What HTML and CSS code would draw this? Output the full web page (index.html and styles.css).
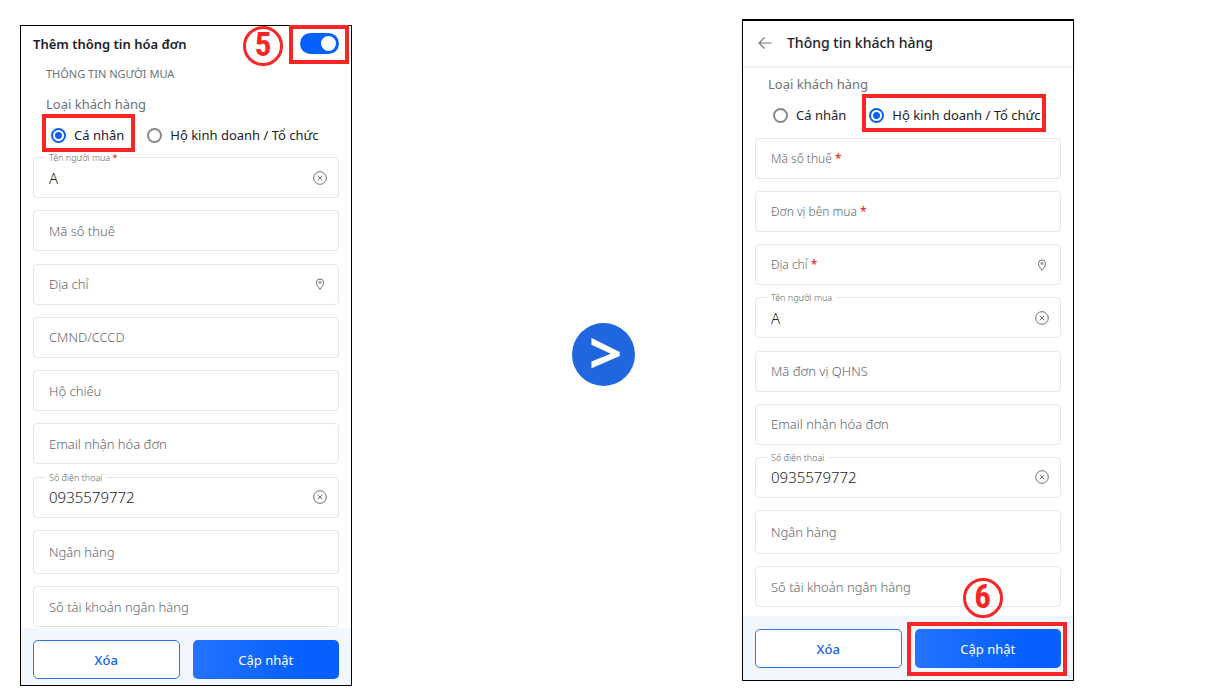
FILE: index.html
```
<!DOCTYPE html>
<html lang="vi">
<head>
<meta charset="utf-8">
<meta name="viewport" content="width=device-width, initial-scale=1">
<title>Thông tin hóa đơn</title>
<link rel="stylesheet" href="styles.css">
</head>
<body>
<svg class="sprite" aria-hidden="true">
  <symbol id="clear" viewBox="0 0 14 14"><circle cx="7" cy="7" r="6.3"/><path d="M4.8 4.8l4.4 4.4M9.2 4.8L4.8 9.2"/></symbol>
  <symbol id="pin" viewBox="0 0 14 14"><path d="M7 12.3C5 9.7 3.5 7.8 3.5 5.6a3.5 3.7 0 0 1 7 0C10.500 7.800 9 9.700 7 12.300z"/><circle cx="7" cy="5.400" r="1"/></symbol>
</svg>
<main class="guide">
  <form class="phone phone-first">
    <header class="invoice-head">
      <label class="invoice-title" for="invoice">Thêm thông tin hóa đơn</label>
      <span class="step">5</span>
      <span class="marked marked-switch"><input class="switch" id="invoice" type="checkbox" role="switch" checked></span>
    </header>
    <h2 class="section-title">THÔNG TIN NGƯỜI MUA</h2>
    <p class="group-title">Loại khách hàng</p>
    <div class="choices">
      <label class="choice marked"><input type="radio" name="type1" checked>Cá nhân</label>
      <label class="choice"><input type="radio" name="type1">Hộ kinh doanh / Tổ chức</label>
    </div>
    <div class="fields">
      <div class="field filled"><label for="a1">Tên người mua <b>*</b></label><input id="a1" value="A"><button type="button" class="icon" aria-label="Xóa nội dung"><svg><use href="#clear"/></svg></button></div>
      <div class="field"><label for="a2">Mã số thuế</label><input id="a2"></div>
      <div class="field"><label for="a3">Địa chỉ</label><input id="a3"><button type="button" class="icon" aria-label="Chọn vị trí"><svg><use href="#pin"/></svg></button></div>
      <div class="field"><label for="a4">CMND/CCCD</label><input id="a4"></div>
      <div class="field"><label for="a5">Hộ chiếu</label><input id="a5"></div>
      <div class="field"><label for="a6">Email nhận hóa đơn</label><input id="a6"></div>
      <div class="field filled"><label for="a7">Số điện thoại</label><input id="a7" value="0935579772"><button type="button" class="icon" aria-label="Xóa nội dung"><svg><use href="#clear"/></svg></button></div>
      <div class="field tall"><label for="a8">Ngân hàng</label><input id="a8"></div>
      <div class="field"><label for="a9">Số tài khoản ngân hàng</label><input id="a9"></div>
    </div>
    <footer class="actions">
      <button type="button" class="btn">Xóa</button>
      <button type="button" class="btn primary">Cập nhật</button>
    </footer>
  </form>

  <div class="next">&gt;</div>

  <form class="phone phone-second">
    <header class="app-bar">
      <button type="button" class="back" aria-label="Quay lại"><svg viewBox="0 0 14 14"><path d="M13.500 7H1M6.500 1.500L1 7l5.500 5.500"/></svg></button>
      <h1 class="app-title">Thông tin khách hàng</h1>
    </header>
    <p class="group-title">Loại khách hàng</p>
    <div class="choices">
      <label class="choice"><input type="radio" name="type2">Cá nhân</label>
      <label class="choice marked"><input type="radio" name="type2" checked>Hộ kinh doanh / Tổ chức</label>
    </div>
    <div class="fields">
      <div class="field required"><label for="b1">Mã số thuế <b>*</b></label><input id="b1"></div>
      <div class="field required"><label for="b2">Đơn vị bên mua <b>*</b></label><input id="b2"></div>
      <div class="field required"><label for="b3">Địa chỉ <b>*</b></label><input id="b3"><button type="button" class="icon" aria-label="Chọn vị trí"><svg><use href="#pin"/></svg></button></div>
      <div class="field filled"><label for="b4">Tên người mua</label><input id="b4" value="A"><button type="button" class="icon" aria-label="Xóa nội dung"><svg><use href="#clear"/></svg></button></div>
      <div class="field"><label for="b5">Mã đơn vị QHNS</label><input id="b5"></div>
      <div class="field"><label for="b6">Email nhận hóa đơn</label><input id="b6"></div>
      <div class="field filled"><label for="b7">Số điện thoại</label><input id="b7" value="0935579772"><button type="button" class="icon" aria-label="Xóa nội dung"><svg><use href="#clear"/></svg></button></div>
      <div class="field tall"><label for="b8">Ngân hàng</label><input id="b8"></div>
      <div class="field"><label for="b9">Số tài khoản ngân hàng</label><input id="b9"></div>
    </div>
    <footer class="actions">
      <button type="button" class="btn">Xóa</button>
      <span class="marked marked-button"><button type="button" class="btn primary">Cập nhật</button><span class="step">6</span></span>
    </footer>
  </form>
</main>
</body>
</html>
```
FILE: styles.css
```
* { box-sizing: border-box; }
body { margin: 0; background: #fff; color: #1d2129; font: 13px/20px "Noto Sans", "Open Sans", sans-serif; }
h1, h2, p { margin: 0; font-weight: 400; }
button, input { font: inherit; color: inherit; }
button { padding: 0; border: 0; background: none; }
svg { display: block; fill: none; stroke: #6d717a; stroke-width: 1; }
.sprite { position: absolute; width: 0; height: 0; }

.guide { display: grid; grid-template-columns: 332fr 390fr 332fr; min-height: 100vh; padding: 0 133px 0 20px; }
.phone { display: flex; flex-direction: column; border: 1px solid #000; background: #fff; }
.phone-first { margin: 25px 0 14px; }
.phone-second { margin: 19px 0; border-top-width: 2px; }

.invoice-head { position: relative; display: flex; align-items: center; justify-content: space-between; height: 35px; padding: 0 12px; }
.invoice-title { font-weight: 600; font-size: 13px; }
.section-title { margin: 3px 25px 0; font-size: 11px; color: #6d717a; }
.group-title { margin: 10px 25px 0; font-size: 13px; color: #6d717a; }

.app-bar { display: flex; align-items: center; gap: 15px; height: 45px; padding: 0 15px 2px; box-shadow: 0 1px 3px #0000001a; }
.back svg { width: 14px; height: 14px; stroke-width: 1.200; }
.app-title { font-size: 14px; font-weight: 500; }
.phone-second .group-title { margin-top: 8px; }

.choices { display: flex; gap: 23px; margin: 11px 0 12px 30px; }
.phone-second .choices { margin-bottom: 13px; }
.choice { display: flex; align-items: center; gap: 8px; font-size: 13px; white-space: nowrap; }
.choice input { appearance: none; width: 15px; height: 15px; margin: 0; border: 2px solid #858890; border-radius: 50%; background: #fff; }
.choice input:checked { border-color: #0560fd; background: radial-gradient(circle, #0560fd 3px, #fff 4px); }

.marked { position: relative; z-index: 1; }
.marked::after { content: ""; position: absolute; inset: -11px -11px -7px -9px; border: 4px solid #f92525; pointer-events: none; }
.phone-second .choice.marked::after { right: -5px; left: -7px; }
.marked-switch { display: flex; }
.marked-switch::after { inset: -8px -10px -10px -11px; }
.marked-button { display: grid; }
.marked-button::after { inset: -7px -6px -8px -8px; }

.switch { appearance: none; width: 39px; height: 21px; margin: 0; padding: 3px; border-radius: 11px; background: #0560fd; }
.switch::before { content: ""; display: block; width: 15px; height: 15px; margin-left: auto; border-radius: 50%; background: #fff; }

.step { position: absolute; width: 40px; height: 40px; border: 3px solid #f92525; border-radius: 50%; color: #f92525; font: 700 33px/32px "Liberation Sans Narrow", "Roboto Condensed", "DejaVu Sans Condensed", sans-serif; text-align: center; }
.invoice-head .step { top: 0; right: 68px; }
.marked-button .step { top: -51px; left: 48px; }

.fields { flex: 1; display: flex; flex-direction: column; justify-content: space-between; padding: 0 12px 1px; }
.phone-second .fields { padding-bottom: 9px; }
.field { position: relative; display: flex; align-items: center; height: 41px; border: 1px solid #e5e6e9; border-radius: 4px; }
.tall { height: 44px; }
.field input { flex: 1; min-width: 0; width: 100%; height: 100%; padding: 0 15px; border: 0; background: none; font-size: 15px; font-weight: 300; outline: 0; }
.field label { position: absolute; left: 15px; font-size: 13px; font-weight: 300; color: #62666e; white-space: nowrap; }
.field.required label { font-size: 12px; }
.field b { color: #e03c3c; font-weight: 600; }
.field.filled label { top: -6px; left: 11px; padding: 0 4px; background: #fff; font-size: 9px; line-height: 12px; }
.icon { flex: none; margin-right: 11px; }
.icon svg { width: 14px; height: 14px; }

.actions { display: grid; grid-template-columns: 1fr 1fr; gap: 13px; padding: 12px 12px 6px; background: #f2f6fe; }
.phone-second .actions { padding: 13px 12px 12px; }
.btn { height: 39px; border: 1px solid #2a74f5; border-radius: 5px; background: #fff; color: #0f5fe8; font-size: 13px; font-weight: 500; }
.primary { border: 0; background: linear-gradient(90deg, #2473ff, #0560fd 75%); color: #fff; font-weight: 400; }

.next { place-self: center end; display: grid; place-items: center; width: 63px; height: 63px; margin: 9px 107px 0 0; padding: 0 0 5px 4px; border-radius: 50%; background: #2066df; color: #fff; font: 700 58px/58px "Open Sans", sans-serif; }
```
